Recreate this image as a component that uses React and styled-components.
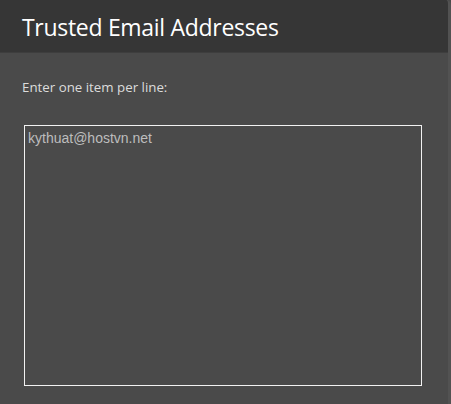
import React from 'react'
import styled, { createGlobalStyle } from 'styled-components'

const GlobalStyle = createGlobalStyle`
    html, body {
        margin: 0;
        padding: 0;
        background: #4a4a4a;
    }
    body {
        font-family: "Open Sans", "Noto Sans", sans-serif;
    }
`

/* Panel del dialogo */
const Panel = styled.div`
    width: 448px;
    height: 404px;
    background: #4a4a4a;
    border-right: 3px solid #525252;
    border-top-right-radius: 5px;
    overflow: hidden;
    display: flex;
    flex-direction: column;
`

const Header = styled.div`
    height: 53px;
    background: #363636;
    border-bottom: 1px solid #3e3e3e;
    box-sizing: border-box;
    display: flex;
    align-items: center;
    padding: 2px 22px 0;
`

const Title = styled.h1`
    margin: 0;
    font-size: 23px;
    font-weight: 400;
    color: #ffffff;
    letter-spacing: -0.3px;
`

const Body = styled.div`
    padding: 25px 22px 0 22px;
    display: flex;
    flex-direction: column;
`

const Hint = styled.label`
    font-size: 13.3px;
    color: #dcdcdc;
    line-height: 18px;
`

const ListArea = styled.textarea`
    margin: 29px 0 0 2px;
    width: 398px;
    height: 261px;
    box-sizing: border-box;
    background: transparent;
    border: 1px solid #f2f2f2;
    border-radius: 0;
    color: #bdbdbd;
    font-family: "Liberation Sans", Arial, sans-serif;
    font-size: 14px;
    line-height: 17px;
    padding: 4px 3px;
    resize: none;
    outline: none;
`

const App = () => {
    return (
        <>
            <GlobalStyle />
            <Panel>
                <Header>
                    <Title>Trusted Email Addresses</Title>
                </Header>
                <Body>
                    <Hint>Enter one item per line:</Hint>
                    <ListArea defaultValue='kythuat@hostvn.net' spellCheck={false} />
                </Body>
            </Panel>
        </>
    )
}

export default App
